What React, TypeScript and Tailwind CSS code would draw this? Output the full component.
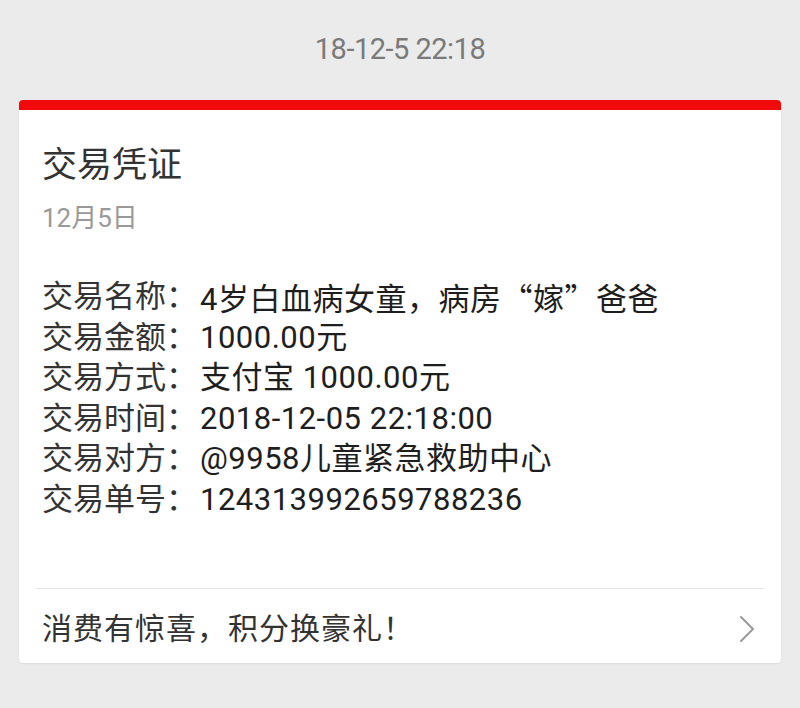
import React from 'react';

const Q = ({ c }: { c: string }) => (
  <span className="[font-feature-settings:'fwid'] [font-family:'Noto_Sans_CJK_SC',sans-serif]">{c}</span>
);

const rows: [string, React.ReactNode][] = [
  ['交易名称', <>4岁白血病女童，病房<Q c="“" />嫁<Q c="”" />爸爸</>],
  ['交易金额', '1000.00元'],
  ['交易方式', '支付宝 1000.00元'],
  ['交易时间', '2018-12-05 22:18:00'],
  ['交易对方', '@9958儿童紧急救助中心'],
  ['交易单号', '124313992659788236'],
];

export default function App() {
  return (
    <div
      className="min-h-screen w-[800px] h-[708px] bg-[#ebebeb] overflow-hidden"
      style={{ fontFamily: 'Roboto, "Noto Sans CJK SC", sans-serif' }}
    >
      {/* Timestamp */}
      <div className="h-[100px] flex items-center justify-center text-[29px] text-[#7a7a7a] tracking-[-0.5px]">
        18-12-5 22:18
      </div>

      {/* Card */}
      <div className="mx-[19px] bg-white rounded-[4px] overflow-hidden shadow-[0_1px_2px_rgba(0,0,0,0.08)]">
        <div className="h-[10px] bg-[#f00a0a]" />

        <div className="pl-[23px] pr-[23px]">
          <div className="pt-[34px] h-[78px] text-[35px] leading-[44px] text-[#333]">交易凭证</div>
          <div className="mt-[14px] h-[32px] text-[26px] leading-[32px] text-[#999]">12月5日</div>

          <div className="mt-[43px] mb-[67px]">
            {rows.map(([label, value]) => (
              <div key={label} className="flex h-[40.6px] text-[31px] leading-[40.6px] text-[#1e1e1e]">
                <span className="w-[158px] shrink-0 text-[#333]">{label}：</span>
                <span className="tracking-[0.5px]">{value}</span>
              </div>
            ))}
          </div>
        </div>

        <div className="mx-[17px] h-px bg-[#e2e2e2]" />

        <div className="h-[74px] flex items-center justify-between pl-[23px] pr-[26px] pt-[6px]">
          <span className="text-[30px] tracking-[1px] text-[#333]">消费有惊喜，积分换豪礼！</span>
          <svg width="16" height="28" viewBox="0 0 16 28" fill="none">
            <path d="M2 2 L14 14 L2 26" stroke="#9a9a9a" strokeWidth="2" strokeLinecap="round" strokeLinejoin="round" />
          </svg>
        </div>
      </div>
    </div>
  );
}
